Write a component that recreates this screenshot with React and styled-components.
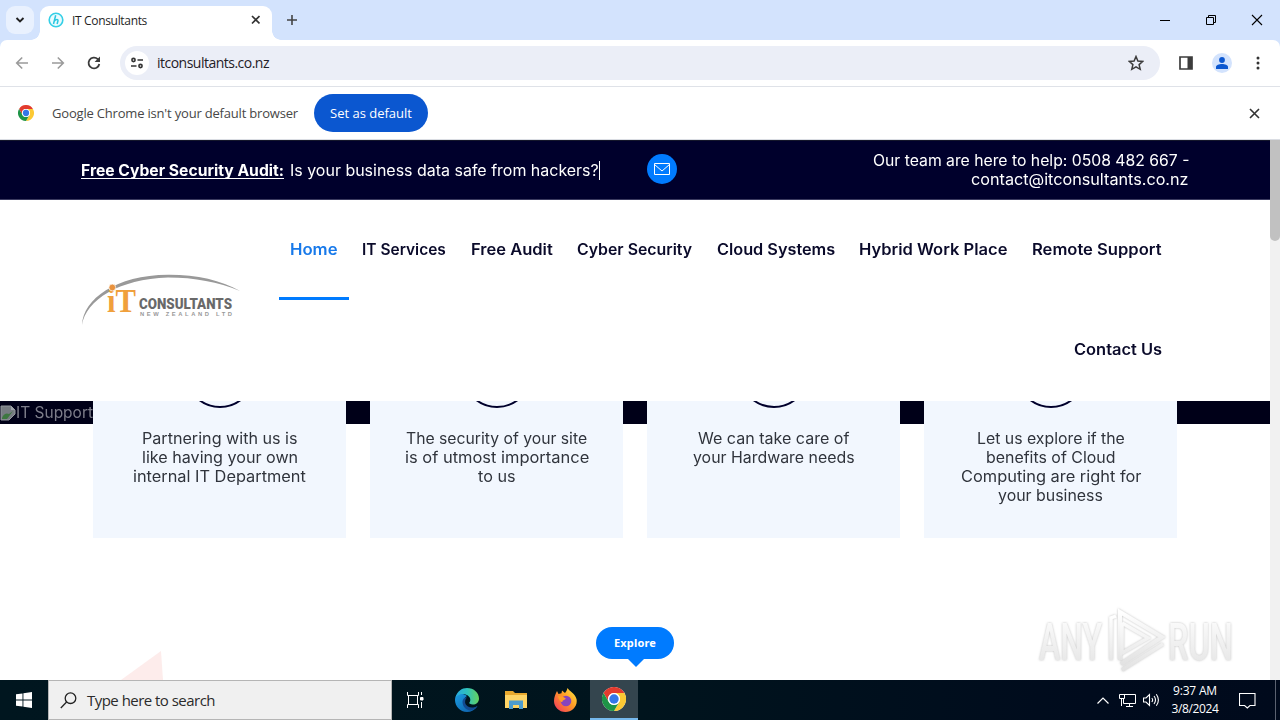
import React, { useLayoutEffect, useRef, useState } from 'react';
import styled, { createGlobalStyle } from 'styled-components';

const Global = createGlobalStyle`
  * { box-sizing: border-box; }
  body { margin: 0; overflow: hidden; background: #fff; }
`;

const brand = 'Inter, "Liberation Sans", sans-serif';
const system = '"Open Sans", "Noto Sans", sans-serif';

const FitSpan = styled.span`
  display: inline-block;
  white-space: pre;
`;
const WideBox = styled.span`
  display: inline-block;
  text-align: left;
`;
const WideSpan = styled.span`
  display: inline-block;
  white-space: pre;
  transform-origin: 0 50%;
`;

/* Tracks a line of text so that it spans the given width. */
function Fit({ w, children }) {
  const ref = useRef(null);
  const [spacing, setSpacing] = useState(0);
  useLayoutEffect(() => {
    const natural = ref.current.getBoundingClientRect().width;
    setSpacing((w - natural) / children.length);
  }, [w, children]);
  return <FitSpan ref={ref} style={{ letterSpacing: spacing }}>{children}</FitSpan>;
}

/* Widens the letterforms of a line so that it spans the given width. */
function Wide({ w, children }) {
  const ref = useRef(null);
  const [scale, setScale] = useState(1);
  useLayoutEffect(() => {
    setScale(w / ref.current.offsetWidth);
  }, [w, children]);
  return (
    <WideBox style={{ width: w }}>
      <WideSpan ref={ref} style={{ transform: `scaleX(${scale})` }}>{children}</WideSpan>
    </WideBox>
  );
}

const Screen = styled.div`
  width: 1280px;
  height: 720px;
  display: flex;
  flex-direction: column;
  overflow: hidden;
  font-family: ${system};
`;

/* ---------- browser chrome ---------- */
const TabStrip = styled.div`
  height: 40px;
  flex: none;
  background: #d3e3fd;
  display: flex;
  align-items: center;
  padding-left: 6px;
`;
const TabSearch = styled.div`
  width: 28px;
  height: 28px;
  border-radius: 9px;
  background: #e9f1fe;
  display: grid;
  place-items: center;
`;
const Tab = styled.div`
  position: relative;
  align-self: flex-end;
  width: 232px;
  height: 34px;
  margin-left: 6px;
  padding: 0 12px 6px 8px;
  display: flex;
  align-items: center;
  background: #fff;
  border-radius: 9px 9px 0 0;
  font-size: 12px;
  color: #1f1f1f;
  &::before, &::after {
    content: '';
    position: absolute;
    bottom: 0;
    width: 9px;
    height: 9px;
  }
  &::before { left: -9px; background: radial-gradient(circle at 0 0, transparent 8.5px, #fff 9px); }
  &::after { right: -9px; background: radial-gradient(circle at 100% 0, transparent 8.5px, #fff 9px); }
`;
const TabTitle = styled.span`
  flex: 1;
  margin-left: 8px;
`;
const NewTab = styled.div`
  margin-left: 12px;
  display: flex;
`;
const WindowButtons = styled.div`
  margin-left: auto;
  display: flex;
`;
const WindowButton = styled.div`
  width: 46px;
  display: grid;
  place-items: center;
`;
const ToolbarBack = styled.div`
  flex: none;
  background: #d3e3fd;
`;
const Toolbar = styled.div`
  height: 47px;
  background: #fff;
  border-radius: 7px 7px 0 0;
  border-bottom: 1px solid #dfe2e8;
  display: flex;
  align-items: center;
  padding: 0 4px 0 13px;
`;
const ToolIcon = styled.div`
  width: ${(p) => p.$w || 36}px;
  height: 36px;
  flex: none;
  display: grid;
  place-items: center;
`;
const Address = styled.div`
  width: 1040px;
  flex: none;
  height: 34px;
  margin-right: 8px;
  border-radius: 17px;
  background: #ebeef7;
  display: flex;
  align-items: center;
  padding: 0 6px 0 5px;
  font-size: 14px;
  color: #1f2026;
`;
const SiteInfo = styled.div`
  width: 24px;
  height: 24px;
  border-radius: 50%;
  background: #fff;
  display: grid;
  place-items: center;
  margin-right: 8px;
`;
const AddressText = styled.div`
  flex: 1;
  padding-bottom: 1px;
`;
const Avatar = styled.div`
  width: 20px;
  height: 20px;
  border-radius: 50%;
  background: #d3e3fd;
  display: grid;
  place-items: center;
`;
const InfoBar = styled.div`
  height: 53px;
  flex: none;
  background: #fff;
  border-bottom: 1px solid #dadde3;
  display: flex;
  align-items: center;
  padding: 0 20px 0 18px;
  font-size: 13px;
  color: #474747;
`;
const InfoText = styled.div`
  margin: 0 16px 0 18px;
  width: 246px;
`;
const DefaultButton = styled.div`
  width: 114px;
  height: 38px;
  border-radius: 19px;
  background: #0b57d0;
  color: #fff;
  display: grid;
  place-items: center;
`;
const CloseBar = styled.div`
  margin-left: auto;
  display: flex;
`;

/* ---------- web page ---------- */
const Viewport = styled.div`
  height: 540px;
  flex: none;
  display: flex;
  position: relative;
  background: #fff;
`;
const Page = styled.div`
  width: 1270px;
  font-family: ${brand};
  font-size: 15.3px;
`;
const Scroll = styled.div`
  width: 10px;
  background: #f1f1f1;
`;
const Thumb = styled.div`
  height: 101px;
  background: #c1c1c1;
  border-radius: 0 0 5px 5px;
`;
const TopBar = styled.div`
  height: 60px;
  background: #00002c;
  border-top: 1px solid #14162b;
  border-bottom: 1px solid #3b3b60;
  color: #fff;
  display: flex;
  align-items: center;
  padding: 0 81px;
`;
const Audit = styled.div`
  flex: none;
  width: 566px;
  display: flex;
  align-items: center;
`;
const AuditLink = styled.span`
  font-weight: 700;
  margin-right: 6px;
  ${WideSpan} {
    text-decoration: underline;
    text-underline-offset: 2px;
    text-decoration-skip-ink: none;
  }
`;
const Caret = styled.span`
  width: 1px;
  height: 19px;
  background: #fff;
`;
const MailButton = styled.div`
  width: 30px;
  height: 30px;
  border-radius: 50%;
  background: #007bff;
  display: grid;
  place-items: center;
  margin-bottom: 2px;
`;
const Contact = styled.div`
  margin-left: auto;
  display: flex;
  flex-direction: column;
  align-items: flex-end;
  line-height: 19px;
  margin-bottom: 1px;
`;
const Header = styled.div`
  height: 201px;
  background: #fff;
  display: flex;
  align-items: center;
  padding-left: 77px;
`;
const LogoBox = styled.div`
  width: 200px;
  flex: none;
  display: flex;
`;
const Nav = styled.div`
  width: 896px;
  height: 201px;
  display: flex;
  flex-wrap: wrap;
  justify-content: flex-end;
  align-content: flex-start;
`;
const NavItem = styled.div`
  height: 100px;
  width: ${(p) => p.$w}px;
  margin-right: ${(p) => (p.$active ? 2 : 0)}px;
  padding-left: 11px;
  line-height: 100px;
  font-weight: 600;
  white-space: nowrap;
  color: ${(p) => (p.$active ? '#1779ea' : '#0a0a2a')};
  border-bottom: 3px solid ${(p) => (p.$active ? '#007bff' : 'transparent')};
`;
const Hero = styled.div`
  height: 23px;
  background: #000018;
  color: #7d7d8a;
  display: flex;
  align-items: center;
`;
const Cards = styled.div`
  display: grid;
  grid-template-columns: repeat(4, 253px);
  column-gap: 24px;
  margin: -23px 0 0 93px;
  position: relative;
`;
const Card = styled.div`
  height: 137px;
  background: #f2f7fe;
  overflow: hidden;
  display: flex;
  flex-direction: column;
  align-items: center;
  line-height: 19px;
  color: #30343c;
`;
const Ring = styled.div`
  width: 70px;
  height: 70px;
  flex: none;
  border: 2px solid #00002c;
  border-radius: 50%;
  margin: -63px 0 21px;
`;
const Explore = styled.div`
  position: absolute;
  left: 596px;
  top: 487px;
  width: 78px;
  height: 32px;
  padding-bottom: 1px;
  border-radius: 16px;
  background: #007bff;
  color: #fff;
  font: 700 11px "Noto Sans", sans-serif;
  display: grid;
  place-items: center;
  &::after {
    content: '';
    position: absolute;
    left: 32px;
    top: 32px;
    border: 8px solid transparent;
    border-top-color: #007bff;
    border-bottom: 0;
  }
`;
const Wedge = styled.svg`
  position: absolute;
  left: 121px;
  bottom: 0;
`;
const Watermark = styled.svg`
  position: absolute;
  left: 1030px;
  top: 464px;
  overflow: visible;
`;

/* ---------- taskbar ---------- */
const Taskbar = styled.div`
  height: 40px;
  flex: none;
  display: flex;
  align-items: center;
  background: linear-gradient(90deg, #00161f 0, #00141d 50%, #000b1d 85%, #000a1c 100%);
  color: #fff;
`;
const TaskItem = styled.div`
  width: ${(p) => p.$w || 49}px;
  height: 40px;
  flex: none;
  display: grid;
  place-items: center;
  padding-right: ${(p) => p.$inset || 0}px;
  background: ${(p) => (p.$active ? '#34454e' : 'transparent')};
  border-bottom: ${(p) => (p.$active ? '2px solid #76b9ed' : '0')};
`;
const Search = styled.div`
  width: 344px;
  height: 40px;
  background: #f0f0f0;
  border: 1px solid #b5b5b5;
  display: flex;
  align-items: center;
  padding-left: 11px;
  color: #2b2b2b;
  font-size: 15px;
`;
const SearchText = styled.div`margin-left: 10px;`;
const Tray = styled.div`
  margin-left: auto;
  display: flex;
  align-items: center;
`;
const TrayIcon = styled.div`
  width: 24px;
  display: grid;
  place-items: center;
`;
const Clock = styled.div`
  width: 62px;
  margin-left: 1px;
  display: flex;
  flex-direction: column;
  align-items: center;
  font-size: 12px;
  line-height: 18px;
`;
const Notice = styled.div`
  width: 42px;
  margin-right: 7px;
  display: grid;
  place-items: center;
`;
const PeekEdge = styled.div`
  width: 5px;
  height: 40px;
  border-left: 1px solid #5b6270;
`;

const Cross = ({ size = 8, width = 1.7, color = '#333' }) => (
  <svg width={size + 2} height={size + 2} viewBox={`-1 -1 ${size + 2} ${size + 2}`}>
    <path d={`M0 0L${size} ${size}M${size} 0L0 ${size}`} stroke={color} strokeWidth={width} />
  </svg>
);

const ChromeLogo = ({ size }) => (
  <svg width={size} height={size} viewBox="0 0 48 48">
    <circle cx="24" cy="24" r="24" fill="#fff" />
    <path d="M3.2 12A24 24 0 0 1 44.8 12H24A12 12 0 0 0 13.6 30Z" fill="#e33b2e" />
    <path d="M44.8 12A24 24 0 0 1 24 48L34.4 30A12 12 0 0 0 24 12Z" fill="#fcc934" />
    <path d="M24 48A24 24 0 0 1 3.2 12L13.6 30A12 12 0 0 0 34.4 30Z" fill="#1e9447" />
    <circle cx="24" cy="24" r="12" fill="#fff" />
    <circle cx="24" cy="24" r="9.4" fill="#3477e8" />
  </svg>
);

const CompanyLogo = () => (
  <svg width="170" height="60" viewBox="0 0 170 60">
    <path d="M5 54C6 28 39 4 91 3.7C119 3.5 144 9 163 20C141 11 118 6.5 91 6.5C42 8 9 29 5 54Z" fill="#999" />
    <text x="30" y="41" fontFamily="Liberation Serif, serif" fontWeight="700" fontSize="33" fill="#f0a03c" textLength="29" lengthAdjust="spacingAndGlyphs">iT</text>
    <circle cx="35.3" cy="16.5" r="3.4" fill="#e9923e" stroke="#fff" strokeWidth=".7" />
    <text x="62" y="37.8" fontFamily="Roboto, sans-serif" fontWeight="900" fontSize="14.5" fill="#696969" textLength="93" lengthAdjust="spacingAndGlyphs">CONSULTANTS</text>
    <text x="63" y="45.3" fontFamily="Liberation Sans, sans-serif" fontWeight="700" fontSize="5.8" fill="#999" textLength="92" lengthAdjust="spacing">NEW ZEALAND LTD</text>
  </svg>
);

const nav = [
  ['Home', 48, 70, true],
  ['IT Services', 84, 109],
  ['Free Audit', 82, 106],
  ['Cyber Security', 115, 140],
  ['Cloud Systems', 118, 142],
  ['Hybrid Work Place', 148, 173],
  ['Remote Support', 130, 152],
  ['Contact Us', 88, 110],
];

const cards = [
  [['Partnering with us is', 156], ['like having your own', 156], ['internal IT Department', 173]],
  [['The security of your site', 181], ['is of utmost importance', 184], ['to us', 37]],
  [['We can take care of', 151], ['your Hardware needs', 162]],
  [['Let us explore if the', 148], ['benefits of Cloud', 129], ['Computing are right for', 180], ['your business', 105]],
];

function BrowserChrome() {
  return (
    <>
      <TabStrip>
        <TabSearch>
          <svg width="10" height="8" viewBox="0 0 10 8"><path d="M1.5 2L5 5.5L8.5 2" fill="none" stroke="#222" strokeWidth="1.9" /></svg>
        </TabSearch>
        <Tab>
          <svg width="16" height="16" viewBox="0 0 16 16">
            <circle cx="8" cy="8" r="6.8" fill="#e9fbfe" stroke="#35cfe6" strokeWidth="1.6" />
            <path d="M7.7 3.2L5.5 12M6.4 9C8 6.8 10.5 6.9 9.9 9L9.1 12" fill="none" stroke="#29c7e0" strokeWidth="1.5" />
          </svg>
          <TabTitle><Fit w={75}>IT Consultants</Fit></TabTitle>
          <Cross size={7.5} />
        </Tab>
        <NewTab>
          <svg width="16" height="16" viewBox="0 0 16 16"><path d="M8 3V13M3 8H13" stroke="#444" strokeWidth="1.6" /></svg>
        </NewTab>
        <WindowButtons>
          <WindowButton><svg width="10" height="10"><path d="M0 5.5H10" stroke="#000" /></svg></WindowButton>
          <WindowButton><svg width="10" height="10" fill="none" stroke="#000"><path d="M.5 2.5H7.5V9.5H.5ZM2.5 2.5V.5H9.5V7.5H7.5" /></svg></WindowButton>
          <WindowButton><Cross size={10} width={1.1} color="#000" /></WindowButton>
        </WindowButtons>
      </TabStrip>
      <ToolbarBack>
        <Toolbar>
          <ToolIcon $w={18}><svg width="14" height="14" fill="none" stroke="#9b9b9b" strokeWidth="1.6"><path d="M13 7H2M7.2 1.5L1.7 7L7.2 12.5" /></svg></ToolIcon>
          <ToolIcon $w={54}><svg width="14" height="14" fill="none" stroke="#9b9b9b" strokeWidth="1.6"><path d="M1 7H12M6.8 1.5L12.3 7L6.8 12.5" /></svg></ToolIcon>
          <ToolIcon $w={18}>
            <svg width="14" height="14" viewBox="0 0 14 14"><path d="M12.3 8A5.4 5.4 0 1 1 10.8 3.2L12 4.4" fill="none" stroke="#3c3c3c" strokeWidth="1.8" /><path d="M13 .6V6H7.6Z" fill="#3c3c3c" /></svg>
          </ToolIcon>
          <ToolIcon $w={17} />
          <Address>
            <SiteInfo>
              <svg width="14" height="12" viewBox="0 0 14 12" fill="none" stroke="#333" strokeWidth="1.6"><circle cx="3.5" cy="3" r="1.6" /><path d="M7.5 3H13M1 9H6.5" /><circle cx="10.5" cy="9" r="1.6" /></svg>
            </SiteInfo>
            <AddressText><Fit w={112}>itconsultants.co.nz</Fit></AddressText>
            <ToolIcon>
              <svg width="16" height="16" viewBox="0 0 16 16"><path d="M8 1.5L9.9 6L14.8 6.4L11.1 9.6L12.2 14.3L8 11.8L3.8 14.3L4.9 9.6L1.2 6.4L6.1 6Z" fill="none" stroke="#3c3c3c" strokeWidth="1.5" /></svg>
            </ToolIcon>
          </Address>
          <ToolIcon><svg width="14" height="14"><path d="M1 1H13V13H1Z" fill="none" stroke="#3c3c3c" strokeWidth="1.7" /><path d="M8.5 1H13V13H8.5Z" fill="#3c3c3c" /></svg></ToolIcon>
          <ToolIcon>
            <Avatar><svg width="12" height="12" viewBox="0 0 12 12" fill="#0b57d0"><circle cx="6" cy="3" r="2.9" /><path d="M0 12V10C0 8.2 3 7 6 7S12 8.2 12 10V12Z" /></svg></Avatar>
          </ToolIcon>
          <ToolIcon><svg width="4" height="14" fill="#333"><circle cx="2" cy="2" r="1.5" /><circle cx="2" cy="7" r="1.5" /><circle cx="2" cy="12" r="1.5" /></svg></ToolIcon>
        </Toolbar>
      </ToolbarBack>
      <InfoBar>
        <ChromeLogo size={16} />
        <InfoText><Fit w={246}>Google Chrome isn't your default browser</Fit></InfoText>
        <DefaultButton><Fit w={82}>Set as default</Fit></DefaultButton>
        <CloseBar><Cross size={9} width={1.6} /></CloseBar>
      </InfoBar>
    </>
  );
}

function WebPage() {
  return (
    <Viewport>
      <Page>
        <TopBar>
          <Audit>
            <AuditLink><Wide w={203}>Free Cyber Security Audit:</Wide></AuditLink>
            <Wide w={309}>Is your business data safe from hackers?</Wide>
            <Caret />
          </Audit>
          <MailButton>
            <svg width="16" height="12" fill="none" stroke="#fff"><path d="M.5 .5H15.5V11.5H.5ZM.5 1.5L8 8L15.5 1.5" /></svg>
          </MailButton>
          <Contact>
            <Wide w={316}>Our team are here to help: 0508 482 667 -</Wide>
            <Wide w={218}>contact@itconsultants.co.nz</Wide>
          </Contact>
        </TopBar>
        <Header>
          <LogoBox><CompanyLogo /></LogoBox>
          <Nav>
            {nav.map(([label, w, box, active]) => (
              <NavItem key={label} $w={box} $active={active}><Wide w={w}>{label}</Wide></NavItem>
            ))}
          </Nav>
        </Header>
        <Hero>
          <svg width="16" height="16" viewBox="0 0 16 16">
            <path d="M1 1H11L15 5V9L9 15H1Z" fill="#777c82" stroke="#92969b" />
            <path d="M2 13C4 8 7 8 9 9L13 6L7 14H2Z" fill="#3d7740" />
            <path d="M11 1V5H15Z" fill="#a0a4aa" />
          </svg>
          <Wide w={77}>IT Support</Wide>
        </Hero>
        <Cards>
          {cards.map((lines) => (
            <Card key={lines[0][0]}>
              <Ring />
              {lines.map(([t, w]) => <Wide key={t} w={w}>{t}</Wide>)}
            </Card>
          ))}
        </Cards>
      </Page>
      <Scroll><Thumb /></Scroll>
      <Wedge width="42" height="29"><path d="M0 29L40 0L42 29Z" fill="#fdeceb" /></Wedge>
      <Explore><Fit w={42}>Explore</Fit></Explore>
      <Watermark width="240" height="74" viewBox="0 0 240 74">
        <defs>
          <linearGradient id="fade" x1="0" y1="0" x2="0" y2="1"><stop offset="0" stopColor="#fff" /><stop offset="1" stopColor="#e2e2e2" /></linearGradient>
          <filter id="halo" x="-10%" y="-10%" width="120%" height="120%"><feDropShadow dx="0" dy="0" stdDeviation="1.3" floodColor="#999" floodOpacity=".65" /></filter>
        </defs>
        <g fill="url(#fade)" filter="url(#halo)" fontFamily="Roboto, sans-serif" fontWeight="500" fontSize="52">
          <text x="9" y="56" textLength="63" lengthAdjust="spacingAndGlyphs">ANY</text>
          <text x="138" y="56" textLength="65" lengthAdjust="spacingAndGlyphs">RUN</text>
          <g fill="none" stroke="url(#fade)" strokeWidth="4">
            <path d="M90 56V8L132 33L91 60" />
            <path d="M81 56V14L86 12M92 19V49L118 34L92 19M92 66L133 40" strokeWidth="3.5" />
          </g>
        </g>
      </Watermark>
    </Viewport>
  );
}

function WindowsTaskbar() {
  return (
    <Taskbar>
      <TaskItem $w={48}>
        <svg width="16" height="16" fill="#fff"><path d="M0 2.3L6.5 1.4V7.4H0ZM7.4 1.2L16 0V7.4H7.4ZM0 8.4H6.5V14.6L0 13.7ZM7.4 8.4H16V16L7.4 14.8Z" /></svg>
      </TaskItem>
      <Search>
        <svg width="17" height="17" fill="none" stroke="#222" strokeWidth="1.3"><circle cx="10.5" cy="6.2" r="5.3" /><path d="M6.6 10L.8 16" /></svg>
        <SearchText><Fit w={128}>Type here to search</Fit></SearchText>
      </Search>
      <TaskItem $w={50} $inset={3}>
        <svg width="17" height="16" fill="none" stroke="#fff"><path d="M.5 0V3.5H11.5V0M.5 16V12.5H11.5V16M1.5 3.5V12.5M10.5 3.5V12.5M14.5 0V3M14.5 10V16" /><path d="M13.5 5.5H16V8H13.5Z" fill="#fff" /></svg>
      </TaskItem>
      <TaskItem $w={50}>
        <svg width="24" height="24" viewBox="0 0 24 24">
          <defs>
            <linearGradient id="edgeTop"><stop offset="0" stopColor="#27a9e1" /><stop offset=".5" stopColor="#2fc2bd" /><stop offset="1" stopColor="#65d25c" /></linearGradient>
            <linearGradient id="edgeLow" x1="0" y1="0" x2="1" y2="1"><stop offset="0" stopColor="#1b9de2" /><stop offset="1" stopColor="#0c59a4" /></linearGradient>
          </defs>
          <path d="M0 12C0 5 7 4 12 8C8 10 7 18 14 20C18 21 21 19 22.5 18C20 22 16 24 12 24C5 24 0 18 0 12Z" fill="url(#edgeLow)" />
          <path d="M.3 10C2 3 7 0 12 0C19 0 24 5 24 10.5C24 16 18 18 14.5 15.5C13.6 14.8 15.5 14 15.3 11.5C15 8 10 5 5 6.5C2.5 7.2 1 8.5 .3 10Z" fill="url(#edgeTop)" />
          <path d="M7.6 13C7 17 10 22 15 22.5C18 22 21 20.4 22.5 18C17 21 12 19 10.5 16C9.6 13.8 10.2 11 12 9.5C9.5 9 8 10.6 7.6 13Z" fill="#124b91" />
        </svg>
      </TaskItem>
      <TaskItem $inset={1}>
        <svg width="22" height="18" viewBox="0 0 22 18"><path d="M0 0H8L10 2H22V17H0Z" fill="#e9a92e" /><path d="M0 4H22V17H0Z" fill="#ffd566" /><path d="M4 18V9.5H18V18H14V14H8V18Z" fill="#4d9cce" /></svg>
      </TaskItem>
      <TaskItem>
        <svg width="23" height="24" viewBox="0 0 23 24">
          <defs><linearGradient id="fire" x1="1" y1="0" x2="0" y2="1"><stop offset="0" stopColor="#fff044" /><stop offset=".45" stopColor="#ff9a25" /><stop offset="1" stopColor="#f02c62" /></linearGradient></defs>
          <path d="M3 3L4.5 6L7.5 5.2L8 2.5L11 5C12 4 13 2 13.5 0C15 3 21 5 22.5 11C24 18 18 24 11.5 24C5 24 0 19 0 13C0 9 1.5 6 3 3Z" fill="url(#fire)" />
          <circle cx="12" cy="13" r="5.3" fill="#8744bd" />
          <path d="M4 8L9 8.7L11.8 10.5C10.5 12.5 8 12 8.5 14C6.4 14.5 4.5 11 4 8Z" fill="#ff9d28" />
        </svg>
      </TaskItem>
      <TaskItem $w={48} $active><ChromeLogo size={24} /></TaskItem>
      <Tray>
        <TrayIcon><svg width="12" height="7" fill="none" stroke="#fff" strokeWidth="1.2"><path d="M.5 6.5L6 1L11.5 6.5" /></svg></TrayIcon>
        <TrayIcon><svg width="17" height="14" fill="none" stroke="#fff"><path d="M5 1.5H16.5V10.5H4.5V5M10.5 10.5V13M7 13.5H14M.5 1.5H5.5V5.5H.5ZM2.5 5.5V13" /></svg></TrayIcon>
        <TrayIcon><svg width="17" height="14" fill="none" stroke="#fff" strokeWidth="1.1"><path d="M.5 5H3L6.5 1.5V12.5L3 9H.5ZM8.8 5Q10.5 7 8.8 9M11 3Q14 7 11 11M13.3 1.2Q17.5 7 13.3 12.8" /></svg></TrayIcon>
        <Clock><Fit w={44}>9:37 AM</Fit><Fit w={47}>3/8/2024</Fit></Clock>
        <Notice><svg width="17" height="17" fill="none" stroke="#fff" strokeWidth="1.1"><path d="M.5 1.5H16V13.5H11L8.3 16L5.6 13.5H.5Z" /></svg></Notice>
        <PeekEdge />
      </Tray>
    </Taskbar>
  );
}

export default function App() {
  return (
    <Screen>
      <Global />
      <BrowserChrome />
      <WebPage />
      <WindowsTaskbar />
    </Screen>
  );
}
